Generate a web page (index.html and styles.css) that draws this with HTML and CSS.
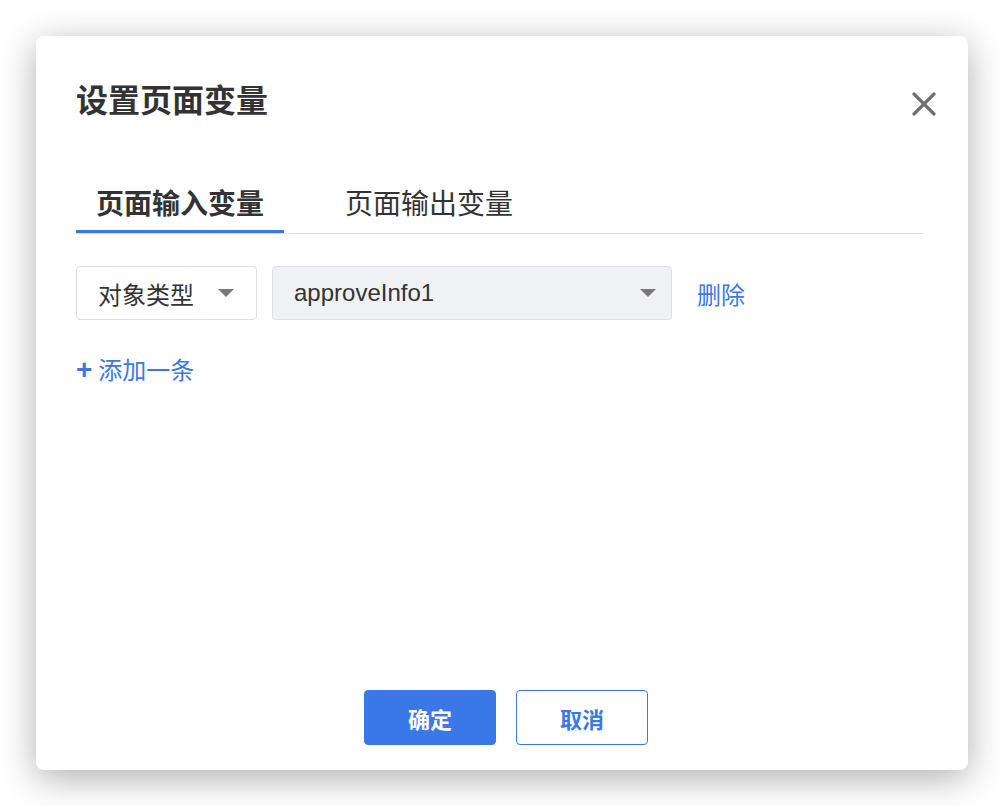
FILE: index.html
```html
<!DOCTYPE html>
<html lang="zh-CN">
<head>
    <meta charset="UTF-8">
    <meta name="viewport" content="width=device-width, initial-scale=1.0">
    <title>设置页面变量</title>
    <link rel="stylesheet" href="styles.css">
</head>
<body>
    <div class="dialog">
        <h2 class="title">设置页面变量</h2>
        <span class="close">
            <svg width="24" height="24" viewBox="0 0 24 24">
                <path d="M2 2 L22 22 M22 2 L2 22" stroke="#707070" stroke-width="3.2" stroke-linecap="round" fill="none"/>
            </svg>
        </span>

        <div class="tabs">
            <div class="tab active">页面输入变量</div>
            <div class="tab">页面输出变量</div>
        </div>

        <div class="row">
            <div class="select type">
                <span>对象类型</span>
                <i class="arrow"></i>
            </div>
            <div class="select value disabled">
                <span>approveInfo1</span>
                <i class="arrow"></i>
            </div>
            <a class="link del">删除</a>
        </div>

        <a class="link add"><b>+</b>添加一条</a>

        <div class="footer">
            <button class="btn primary">确定</button>
            <button class="btn">取消</button>
        </div>
    </div>
</body>
</html>
```

FILE: styles.css
```css
body {
    margin: 0;
    background-color: white;
    font-family: "Noto Sans CJK SC", "Liberation Sans", sans-serif;
    color: #333;
}
.dialog {
    position: relative;
    box-sizing: border-box;
    width: 932px;
    height: 734px;
    margin: 36px;
    padding: 42px 45px 25px 40px;
    background-color: white;
    border-radius: 8px;
    box-shadow: 0 8px 36px rgba(0, 0, 0, 0.32);
    display: flex;
    flex-direction: column;
}
.title {
    margin: 0;
    font-size: 32px;
    line-height: 40px;
    font-weight: 700;
    color: #333;
}
.close {
    position: absolute;
    top: 56px;
    right: 32px;
    width: 24px;
    height: 24px;
}
.tabs {
    display: flex;
    margin-top: 64px;
    border-bottom: 1px solid #dcdfe8;
}
.tab {
    padding: 0 20px 8px;
    font-size: 28px;
    line-height: 40px;
    border-bottom: 3px solid transparent;
    color: #333;
}
.tab + .tab {
    margin-left: 41px;
}
.tab.active {
    font-weight: 700;
    border-bottom-color: #3b78e7;
}
.row {
    display: flex;
    align-items: center;
    margin-top: 32px;
}
.select {
    box-sizing: border-box;
    height: 54px;
    display: flex;
    align-items: center;
    justify-content: space-between;
    border: 1px solid #dcdfe6;
    border-radius: 4px;
    font-size: 24px;
    color: #333;
}
.select.type {
    width: 181px;
    padding: 0 22px 0 21px;
}
.select.value {
    width: 400px;
    margin-left: 15px;
    padding: 0 15px 0 21px;
    font-family: "Liberation Sans", "Noto Sans CJK SC", sans-serif;
}
.select.disabled {
    background-color: #f0f1f4;
}
.arrow {
    width: 0;
    height: 0;
    border-left: 8px solid transparent;
    border-right: 8px solid transparent;
    border-top: 8px solid #7a7a7a;
}
.link {
    color: #3b78e7;
    font-size: 24px;
    cursor: pointer;
}
.del {
    margin-left: 25px;
}
.add {
    margin-top: 29px;
    line-height: 40px;
    align-self: flex-start;
}
.add b {
    font-family: "Liberation Sans", sans-serif;
    font-size: 28px;
    margin-right: 6px;
}
.footer {
    margin-top: auto;
    display: flex;
    justify-content: center;
    gap: 20px;
    padding-left: 13px;
}
.btn {
    width: 132px;
    height: 55px;
    border: 1px solid #3b78e7;
    border-radius: 4px;
    background-color: white;
    color: #3b78e7;
    font-family: "Noto Sans CJK SC", sans-serif;
    font-size: 22px;
    font-weight: 700;
}
.btn.primary {
    background-color: #3b78e7;
    color: white;
}
```
